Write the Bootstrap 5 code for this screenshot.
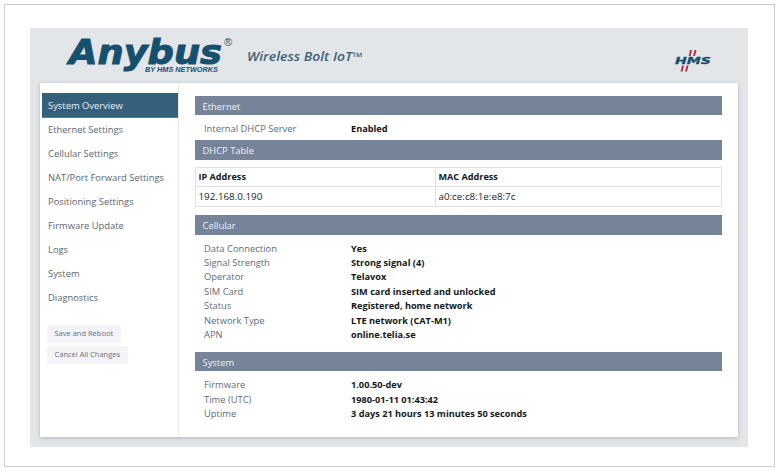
<!DOCTYPE html>
<html lang="en">
<head>
<meta charset="utf-8">
<title>Anybus Wireless Bolt IoT</title>
<link href="https://cdn.jsdelivr.net/npm/bootstrap@5.3.0/dist/css/bootstrap.min.css" rel="stylesheet">
<style>
html, body { background: #fff; height: 471px; overflow: hidden; }
body { font-family: "Open Sans", "Noto Sans", sans-serif; font-size: 9px; padding: 4px 6px 4px 4px; }
.frame { width: 771px; height: 463px; border: 1.5px solid #cbcdcd; padding: 22.5px 25px 18px 24.5px; }
.panel { width: 718px; height: 419px; background: #e3e6e8; padding: 0 10px 10px; }
.topbar { height: 55px; }
.brand { width: 300px; height: 55px; margin-left: 22px; }
.hms { width: 44px; height: 30px; margin-right: 25px; margin-top: 18px; }
.sheet { height: 354px; background: #fff; box-shadow: 0 1px 4px rgba(90,95,100,.35); }
.side { width: 139px; border-right: 1px solid #e8eaec; padding: 10px 0 0 2px; }
.side-link { display: block; height: 24px; line-height: 24px; padding-left: 6.5px; color: #5c6670; text-decoration: none; font-size: 9.4px; white-space: nowrap; }
.side-link.on { height: 25px; line-height: 26px; background: #35607c; color: #e9eef2; border-bottom: 1px solid #5a7e96; }
.side-btn { font-size: 7.5px; line-height: 11px; color: #6a7079; background: #f3f3f8; border: 0; border-radius: 3px; padding: 3px 8px; height: 18px; white-space: nowrap; }
.side-btns { margin: 15px 0 0 5px; gap: 3px; }
.main { padding: 13px 16px 0 16px; width: 559px; }
.bar { background: #76849a; color: #eef1f4; height: 19.5px; line-height: 21px; padding-left: 8px; font-size: 9.4px; }
.kv { display: grid; grid-template-columns: 147px 1fr; padding-left: 9.5px; line-height: 14.4px; color: #5f6d78; font-size: 9.4px; }
.kv b { color: #14181c; font-weight: 700; font-size: 9.2px; }
.kv-one { padding-top: 7px; padding-bottom: 4px; height: 25px; }
.kv-many { padding-top: 7px; }
.dhcp { width: 100%; margin: 7px 0 8.5px; border-collapse: collapse; font-size: 9.8px; color: #20262b; table-layout: fixed; }
.dhcp th, .dhcp td { border: 1px solid #dfe1e3; height: 19.5px; padding: 0 3px; line-height: 16px; }
.dhcp td { padding-top: 1px; }
.dhcp th { font-weight: 700; color: #14181c; font-size: 9.1px; }
.dhcp .first { width: 240px; }
.gap-bar { margin-top: 9.5px; }
</style>
</head>
<body>
<div class="frame">
  <div class="panel">
    <div class="topbar d-flex justify-content-between align-items-center">
      <svg class="brand" viewBox="0 0 300 55" role="img" aria-label="Anybus by HMS Networks">
        <text x="7" y="36" font-family="DejaVu Sans" font-weight="700" font-style="italic" font-size="34" fill="#17506f" stroke="#17506f" stroke-width="1" textLength="153" lengthAdjust="spacingAndGlyphs">Anybus</text>
        <text x="83" y="44" font-family="Liberation Sans" font-weight="700" font-style="italic" font-size="7" fill="#17506f" textLength="73" lengthAdjust="spacingAndGlyphs">BY HMS NETWORKS</text>
        <text x="162" y="18" font-family="Liberation Sans" font-size="11" fill="#17506f">®</text>
        <text x="185" y="33" font-family="Open Sans" font-weight="600" font-style="italic" font-size="12" fill="#3e6079" textLength="116" lengthAdjust="spacingAndGlyphs">Wireless Bolt IoT™</text>
      </svg>
      <svg class="hms" viewBox="0 0 44 30" role="img" aria-label="HMS">
        <path d="M21 1h2l-1.400 6h-2zM25.500 1h2l-1.400 6h-2zM13 16.500h2l-1.400 6h-2zM17.500 16.500h2l-1.400 6h-2z" fill="#b5304c"/>
        <text x="6" y="15" font-family="DejaVu Sans" font-weight="700" font-style="italic" font-size="9.500" fill="#17506f" stroke="#17506f" stroke-width=".3" textLength="36" lengthAdjust="spacingAndGlyphs">HMS</text>
      </svg>
    </div>
    <div class="sheet d-flex">
      <nav class="side flex-shrink-0">
        <a class="side-link on" href="#">System Overview</a>
        <a class="side-link" href="#">Ethernet Settings</a>
        <a class="side-link" href="#">Cellular Settings</a>
        <a class="side-link" href="#">NAT/Port Forward Settings</a>
        <a class="side-link" href="#">Positioning Settings</a>
        <a class="side-link" href="#">Firmware Update</a>
        <a class="side-link" href="#">Logs</a>
        <a class="side-link" href="#">System</a>
        <a class="side-link" href="#">Diagnostics</a>
        <div class="side-btns d-flex flex-column align-items-start">
          <button class="side-btn" type="button">Save and Reboot</button>
          <button class="side-btn" type="button">Cancel All Changes</button>
        </div>
      </nav>
      <main class="main">
        <div class="bar">Ethernet</div>
        <div class="kv kv-one"><span>Internal DHCP Server</span><b>Enabled</b></div>
        <div class="bar">DHCP Table</div>
        <table class="dhcp">
          <tr><th class="first">IP Address</th><th>MAC Address</th></tr>
          <tr><td>192.168.0.190</td><td>a0:ce:c8:1e:e8:7c</td></tr>
        </table>
        <div class="bar">Cellular</div>
        <div class="kv kv-many">
          <span>Data Connection</span><b>Yes</b>
          <span>Signal Strength</span><b>Strong signal (4)</b>
          <span>Operator</span><b>Telavox</b>
          <span>SIM Card</span><b>SIM card inserted and unlocked</b>
          <span>Status</span><b>Registered, home network</b>
          <span>Network Type</span><b>LTE network (CAT-M1)</b>
          <span>APN</span><b>online.telia.se</b>
        </div>
        <div class="bar gap-bar">System</div>
        <div class="kv kv-many">
          <span>Firmware</span><b>1.00.50-dev</b>
          <span>Time (UTC)</span><b>1980-01-11 01:43:42</b>
          <span>Uptime</span><b>3 days 21 hours 13 minutes 50 seconds</b>
        </div>
      </main>
    </div>
  </div>
</div>
<script src="https://cdn.jsdelivr.net/npm/bootstrap@5.3.0/dist/js/bootstrap.bundle.min.js"></script>
</body>
</html>
